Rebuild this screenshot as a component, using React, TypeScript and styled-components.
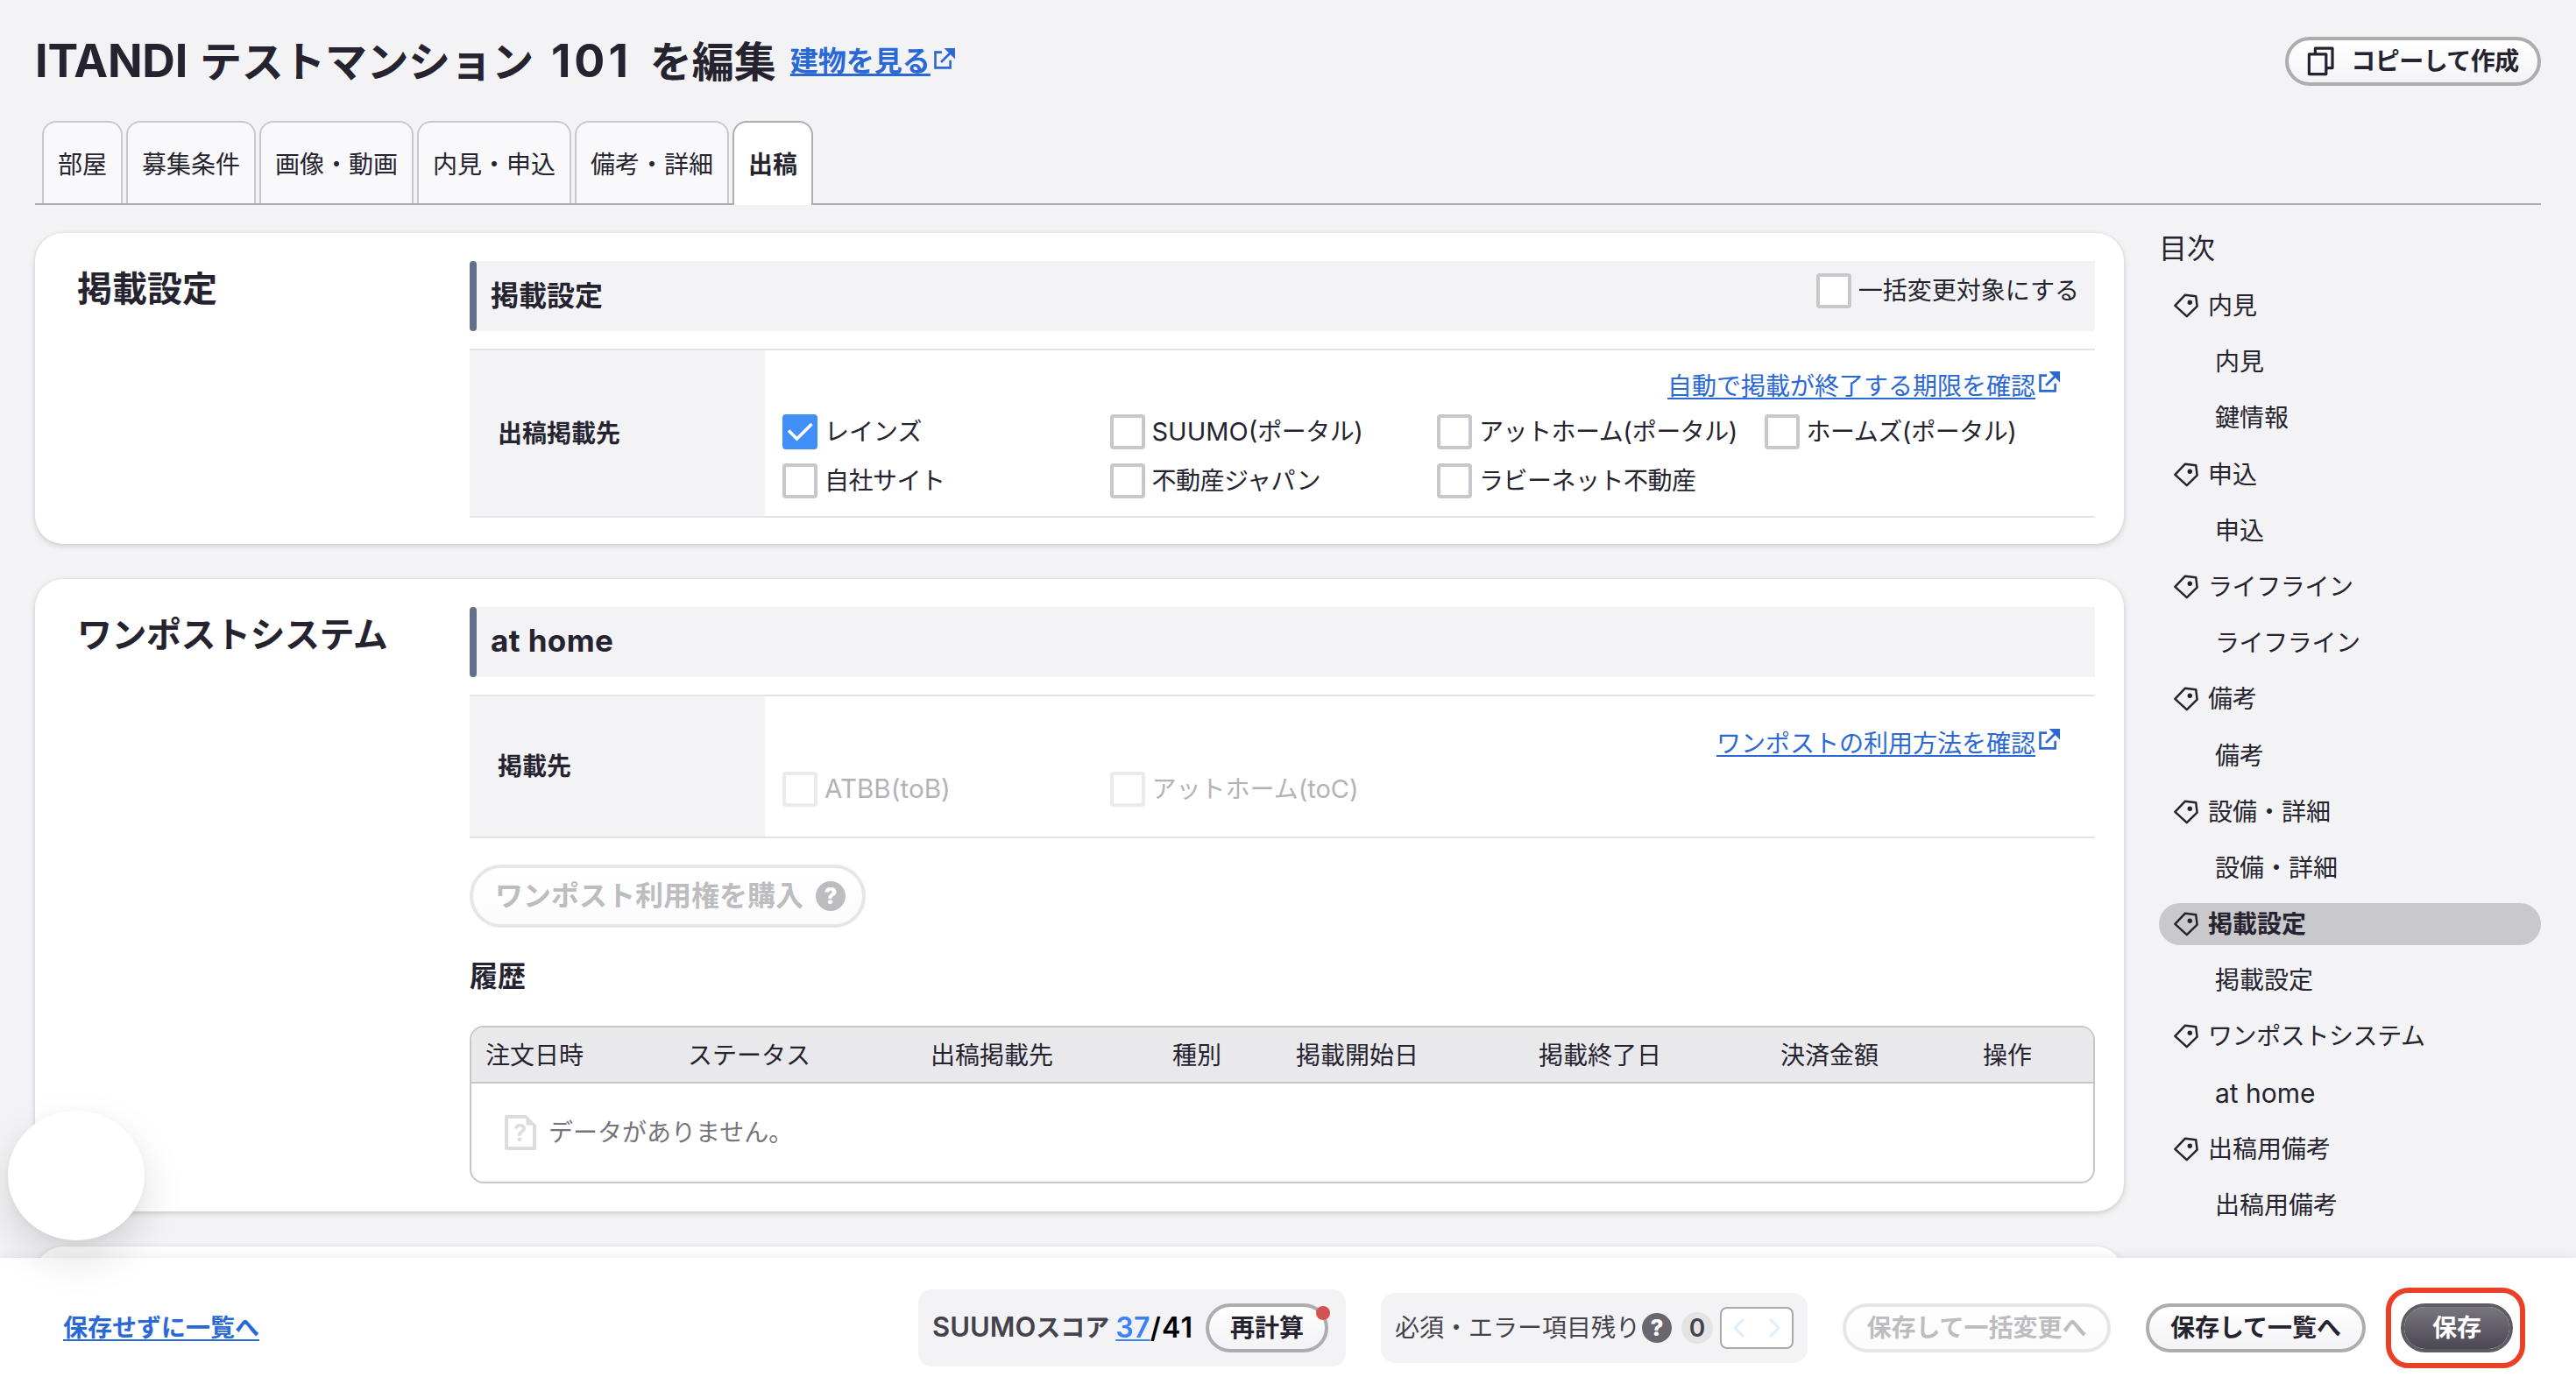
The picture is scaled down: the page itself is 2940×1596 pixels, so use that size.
import React from "react";
import styled, { createGlobalStyle, css } from "styled-components";

const color = {
  bg: "#f3f3f6",
  text: "#262330",
  link: "#2a68d6",
  line: "#e3e3e5",
  border: "#c6c6cb",
  strong: "#adadb0",
};

const GlobalStyle = createGlobalStyle`
  * { box-sizing: border-box; }
  body {
    margin: 0;
    background: ${color.bg};
    color: ${color.text};
    font-family: Inter, "Noto Sans CJK JP", sans-serif;
    font-size: 28px;
    line-height: 40px;
  }
`;

const Page = styled.div`
  position: relative;
  display: flex;
  flex-direction: column;
  width: 2940px;
  height: 1596px;
  overflow: hidden;
`;

const Main = styled.main`
  flex: none;
  height: 1436px;
  padding: 42px 40px 0;
  overflow: hidden;
`;

/* Latin letters are set slightly larger than the kana around them */
const Latin = styled.span<{ $size: number; $spacing?: number }>`
  font-size: ${(p) => p.$size}px;
  letter-spacing: ${(p) => p.$spacing ?? 0}px;
  line-height: 1;
`;

const TitleRow = styled.header`
  display: flex;
  align-items: center;
  height: 56px;
  margin-bottom: 40px;
`;

const Title = styled.h1`
  display: flex;
  align-items: baseline;
  gap: 14px;
  margin: 1px 16px 0 0;
  font-size: 48px;
  font-weight: 700;
  line-height: 56px;
`;

const TitleKana = styled.span`
  letter-spacing: -0.4px;
`;

const RoomNumber = styled(Latin)`
  margin: 0 7px 0 6px;
`;

const TextLink = styled.a<{ $size?: number; $bold?: boolean }>`
  color: ${color.link};
  font-size: ${(p) => p.$size ?? 28}px;
  font-weight: ${(p) => (p.$bold ? 700 : 400)};
  text-decoration: underline;
  text-decoration-thickness: ${(p) => (p.$size ? 3 : 2)}px;
  text-underline-offset: 3px;
  text-decoration-skip-ink: none;
`;

const IconLink = styled.span<{ $lift: number }>`
  display: inline-flex;
  align-items: center;
  gap: 4px;
  line-height: 42px;

  svg {
    margin-bottom: ${(p) => p.$lift}px;
  }
`;

const PillButton = styled.button<{ $width: number; $tone?: "disabled" | "primary" }>`
  display: flex;
  align-items: center;
  justify-content: center;
  flex: none;
  gap: 18px;
  width: ${(p) => p.$width}px;
  height: 56px;
  padding: 0;
  border: 4px solid ${color.strong};
  border-radius: 28px;
  background: linear-gradient(#ffffff, #f3f3f6) padding-box;
  color: ${color.text};
  font: inherit;
  font-weight: 700;
  line-height: 40px;
  white-space: nowrap;

  ${(p) =>
    p.$tone === "disabled" &&
    css`
      border-color: #e6e6e7;
      background: linear-gradient(#ffffff, #fbfbfc) padding-box;
      color: #bdbdc0;
    `}
  ${(p) =>
    p.$tone === "primary" &&
    css`
      border-color: #5e5b64;
      background: linear-gradient(#78767d, #4b4753) padding-box;
      color: #fff;
    `}
`;

const CopyButton = styled(PillButton)`
  margin-left: auto;
  letter-spacing: -0.5px;
`;

const Tabs = styled.nav`
  display: flex;
  gap: 4px;
  height: 96px;
  padding-left: 8px;
  border-bottom: 2px solid ${color.strong};
`;

const Tab = styled.a<{ $active?: boolean }>`
  height: ${(p) => (p.$active ? 96 : 94)}px;
  padding: 28px 16px 0;
  border: 2px solid ${(p) => (p.$active ? color.strong : "#c9c9cb")};
  border-bottom: 0;
  border-radius: 16px 16px 0 0;
  background: ${(p) => (p.$active ? "#fff" : "#f9f9fb")};
  font-weight: ${(p) => (p.$active ? 700 : 400)};
`;

const Columns = styled.div`
  display: flex;
  align-items: flex-start;
  gap: 40px;
  padding-top: 32px;
`;

const Cards = styled.div`
  display: flex;
  flex: none;
  flex-direction: column;
  gap: 40px;
  width: 2384px;
`;

const Card = styled.section<{ $bottom?: number }>`
  display: grid;
  grid-template-columns: 448px 1fr;
  padding: 32px 33px ${(p) => p.$bottom ?? 32}px 48px;
  border-radius: 32px;
  background: #fff;
  box-shadow: 0 2px 6px rgba(38, 35, 48, 0.2), 0 0 2px rgba(38, 35, 48, 0.06);
`;

const CardTitle = styled.h2<{ $kana?: boolean }>`
  margin: 0;
  font-size: 40px;
  font-weight: 700;
  letter-spacing: ${(p) => (p.$kana ? -0.5 : 0)}px;
  line-height: 64px;
`;

const Bar = styled.div`
  display: flex;
  height: 80px;
  margin-bottom: 20px;
  background: ${color.bg};
`;

const BarMark = styled.span`
  width: 8px;
  margin-right: 16px;
  border-radius: 4px;
  background: #64708b;
`;

const BarTitle = styled.h3`
  margin: 0;
  font-size: 32px;
  font-weight: 700;
  line-height: 80px;
`;

const BarOption = styled.div`
  margin: 14px 18px 0 auto;
`;

const FormRow = styled.div`
  display: grid;
  grid-template-columns: 337px 1fr;
  border: solid ${color.line};
  border-width: 2px 0;
`;

const RowLabel = styled.div`
  display: flex;
  align-items: center;
  padding-left: 32px;
  background: ${color.bg};
  font-weight: 700;
`;

const RowBody = styled.div<{ $top: number; $bottom: number }>`
  display: flex;
  flex-direction: column;
  gap: 11px;
  padding: ${(p) => p.$top}px 0 ${(p) => p.$bottom}px 20px;
`;

const HelpLine = styled.div`
  display: flex;
  justify-content: flex-end;
  padding-right: 40px;
`;

const CheckGrid = styled.div`
  display: grid;
  grid-template-columns: repeat(4, 373.5px);
  row-gap: 16px;
  width: 0;
`;

const CheckLabel = styled.label<{ $disabled?: boolean; $tight?: boolean }>`
  display: flex;
  align-items: center;
  gap: 8px;
  height: 40px;
  color: ${(p) => (p.$disabled ? "#b3b3b6" : color.text)};
  letter-spacing: ${(p) => (p.$tight ? -0.5 : 0)}px;
  white-space: nowrap;
`;

const Box = styled.span<{ $checked?: boolean; $disabled?: boolean }>`
  display: block;
  flex: none;
  width: 40px;
  height: 40px;
  border: 4px solid ${(p) => (p.$checked ? "#3f8ff7" : p.$disabled ? "#ebebed" : "#c8c8cc")};
  border-radius: 4px;
  background: ${(p) => (p.$checked ? "#3f8ff7" : "#fff")};

  svg {
    display: block;
    margin: -4px;
  }
`;

const BuyButton = styled(PillButton)`
  gap: 14px;
  height: 72px;
  margin-top: 30px;
  padding-left: 6px;
  border-radius: 36px;
  font-size: 32px;
`;

const HelpMark = styled.span<{ $bg: string }>`
  display: flex;
  align-items: center;
  justify-content: center;
  flex: none;
  width: 34px;
  height: 34px;
  border-radius: 50%;
  background: ${(p) => p.$bg};
  color: #fff;
  font-size: 26px;
  font-weight: 800;
  line-height: 34px;
`;

const HistoryTitle = styled.h4`
  margin: 0;
  font-size: 32px;
  font-weight: 700;
  line-height: 112px;
`;

const Table = styled.div`
  border: 2px solid ${color.border};
  border-radius: 16px;
  overflow: hidden;
`;

const TableHead = styled.div`
  display: grid;
  grid-template-columns: 231px 277px 276px 141px 277px 276px 231px 142px;
  height: 64px;
  border-bottom: 2px solid ${color.border};
  background: #e9e9ec;
  line-height: 64px;
`;

const HeadCell = styled.span`
  padding-left: 16px;
`;

const EmptyRow = styled.div`
  display: flex;
  align-items: center;
  gap: 14px;
  height: 112px;
  padding-left: 38px;
  color: #76747c;
`;

const Aside = styled.aside`
  flex: 1;
`;

const AsideTitle = styled.div`
  margin-bottom: 23px;
  font-size: 32px;
  line-height: 36px;
`;

const TocList = styled.div`
  display: flex;
  flex-direction: column;
  gap: 16.2px;
`;

const TocItem = styled.a<{ $sub?: boolean; $active?: boolean; $kana?: boolean }>`
  display: flex;
  align-items: center;
  gap: 11px;
  height: 48px;
  padding-left: ${(p) => (p.$sub ? 64 : 17)}px;
  border-radius: 24px;
  background: ${(p) => (p.$active ? "#c9c9cb" : "transparent")};
  font-weight: ${(p) => (p.$active ? 700 : 400)};
  letter-spacing: ${(p) => (p.$kana ? -0.4 : 0)}px;
`;

const Footer = styled.footer`
  position: relative;
  display: flex;
  align-items: center;
  justify-content: space-between;
  height: 160px;
  padding: 0 72px;
  background: #fff;
  box-shadow: 0 0 12px rgba(38, 35, 48, 0.1);
`;

const Actions = styled.div`
  display: flex;
  align-items: center;
  gap: 40px;
`;

const Panel = styled.div<{ $width: number; $height: number; $right: number }>`
  display: flex;
  align-items: center;
  width: ${(p) => p.$width}px;
  height: ${(p) => p.$height}px;
  padding: 0 ${(p) => p.$right}px 0 16px;
  border-radius: 16px;
  background: ${color.bg};
  color: #44424c;
  white-space: nowrap;
`;

const ScoreText = styled.span`
  margin-right: 7px;
  font-weight: 600;
`;

const Score = styled(Latin)`
  color: #3b82f6;
  font-weight: 600;
  text-decoration: underline;
  text-decoration-thickness: 2px;
  text-underline-offset: 2px;
`;

const Total = styled(Latin)`
  color: #000;
  font-weight: 600;
`;

const Recalc = styled.div`
  position: relative;
  margin-left: auto;
`;

const Dot = styled.span`
  position: absolute;
  top: 3px;
  right: -2px;
  width: 16px;
  height: 16px;
  border-radius: 50%;
  background: #d55252;
`;

const Count = styled.span`
  width: 36px;
  height: 36px;
  margin: 0 8px 0 11px;
  border-radius: 50%;
  background: #e4e4e4;
  font-weight: 600;
  line-height: 36px;
  text-align: center;
`;

const ErrorMark = styled(HelpMark)`
  margin-left: 2px;
`;

const Stepper = styled.div`
  display: flex;
  align-items: center;
  justify-content: space-between;
  width: 84px;
  height: 48px;
  padding: 0 13px;
  border: 2px solid #a9a9ae;
  border-radius: 8px;
  background: #fff;
`;

const SaveArea = styled.div`
  position: relative;
`;

const SaveFrame = styled.span`
  position: absolute;
  inset: -18px -14px -18px -17px;
  border: 6px solid #ea4025;
  border-radius: 26px;
`;

const FloatingBubble = styled.div`
  position: absolute;
  left: 9px;
  top: 1268px;
  width: 156px;
  height: 148px;
  border-radius: 50%;
  background: #fff;
  box-shadow: 0 20px 48px rgba(0, 0, 0, 0.13), 0 4px 8px rgba(0, 0, 0, 0.04);
`;

const ExternalIcon = () => (
  <svg width="24" height="24" viewBox="0 0 24 24" fill="none" stroke={color.link} strokeWidth="2.6">
    <path d="M9 4.6H1.5V22.4H18.6V13.8" />
    <path d="M8 16L19 5" />
    <path d="M11.5 0H24V12.5Z" fill={color.link} stroke="none" />
  </svg>
);

const CopyIcon = () => (
  <svg width="32" height="34" viewBox="0 0 32 34" fill="none" stroke={color.text} strokeWidth="3.2" strokeLinejoin="round">
    <rect x="2.4" y="8.8" width="19.4" height="22.8" />
    <path d="M9.4 8V2.2H29V24.6H23" />
  </svg>
);

const TagIcon = () => (
  <svg width="28" height="28" viewBox="0 0 28 28" fill="none" stroke={color.text} strokeWidth="2.5" strokeLinejoin="round">
    <path d="M1.4 13.8L13 1.7L25.2 3.2L26.6 14.6L14.8 26.2Z" />
    <circle cx="18.3" cy="10.2" r="2.7" fill={color.text} stroke="none" />
  </svg>
);

const CheckIcon = () => (
  <svg width="40" height="40" viewBox="0 0 40 40" fill="none" stroke="#fff" strokeWidth="3.6">
    <path d="M7 18.5L16.5 28L33.5 11" />
  </svg>
);

const EmptyIcon = () => (
  <svg width="36" height="40" viewBox="0 0 36 40" fill="none" stroke="#dcdcde" strokeWidth="4" strokeLinejoin="round">
    <path d="M25 2H2V38H34V11" />
    <path d="M24.5 0L36 11.5H24.5Z" fill="#dcdcde" stroke="none" />
    <text x="17.5" y="30" textAnchor="middle" fontSize="27" fontWeight="700" fill="#dcdcde" stroke="none">?</text>
  </svg>
);

const Chevron = ({ flip }: { flip?: boolean }) => (
  <svg width="14" height="22" viewBox="0 0 14 22" fill="none" stroke="#dfeeff" strokeWidth="3">
    <path d={flip ? "M2 1L12 11L2 21" : "M12 1L2 11L12 21"} />
  </svg>
);

const hasKatakana = (text: string) => /[ァ-ヶ]/.test(text);

type CheckProps = { children: React.ReactNode; checked?: boolean; disabled?: boolean; tight?: boolean };

const Check = ({ children, checked, disabled, tight }: CheckProps) => (
  <CheckLabel $disabled={disabled} $tight={tight}>
    <Box $checked={checked} $disabled={disabled}>{checked && <CheckIcon />}</Box>
    <span>{children}</span>
  </CheckLabel>
);

const HelpLink = ({ children }: { children: string }) => (
  <HelpLine>
    <IconLink $lift={10}>
      <TextLink>{children}</TextLink>
      <ExternalIcon />
    </IconLink>
  </HelpLine>
);

const tabs = ["部屋", "募集条件", "画像・動画", "内見・申込", "備考・詳細", "出稿"];

const headers = ["注文日時", "ステータス", "出稿掲載先", "種別", "掲載開始日", "掲載終了日", "決済金額", "操作"];

const toc: { name: string; items: string[] }[] = [
  { name: "内見", items: ["内見", "鍵情報"] },
  { name: "申込", items: ["申込"] },
  { name: "ライフライン", items: ["ライフライン"] },
  { name: "備考", items: ["備考"] },
  { name: "設備・詳細", items: ["設備・詳細"] },
  { name: "掲載設定", items: ["掲載設定"] },
  { name: "ワンポストシステム", items: ["at home"] },
  { name: "出稿用備考", items: ["出稿用備考"] },
];

export default function App() {
  return (
    <Page>
      <GlobalStyle />
      <Main>
        <TitleRow>
          <Title>
            <Latin $size={52} $spacing={-0.2}>ITANDI</Latin>
            <TitleKana>テストマンション</TitleKana>
            <RoomNumber $size={52} $spacing={4}>101</RoomNumber>
            <span>を編集</span>
          </Title>
          <IconLink $lift={6}>
            <TextLink $size={32} $bold>建物を見る</TextLink>
            <ExternalIcon />
          </IconLink>
          <CopyButton $width={292}>
            <CopyIcon />
            コピーして作成
          </CopyButton>
        </TitleRow>
        <Tabs>
          {tabs.map((tab) => (
            <Tab key={tab} $active={tab === "出稿"}>{tab}</Tab>
          ))}
        </Tabs>
        <Columns>
          <Cards>
            <Card $bottom={30}>
              <CardTitle>掲載設定</CardTitle>
              <div>
                <Bar>
                  <BarMark />
                  <BarTitle>掲載設定</BarTitle>
                  <BarOption>
                    <Check>一括変更対象にする</Check>
                  </BarOption>
                </Bar>
                <FormRow>
                  <RowLabel>出稿掲載先</RowLabel>
                  <RowBody $top={20} $bottom={20}>
                    <HelpLink>自動で掲載が終了する期限を確認</HelpLink>
                    <CheckGrid>
                      <Check checked>レインズ</Check>
                      <Check tight><Latin $size={29}>SUUMO(</Latin>ポータル<Latin $size={29}>)</Latin></Check>
                      <Check tight>アットホーム<Latin $size={29}>(</Latin>ポータル<Latin $size={29}>)</Latin></Check>
                      <Check tight>ホームズ<Latin $size={29}>(</Latin>ポータル<Latin $size={29}>)</Latin></Check>
                      <Check tight>自社サイト</Check>
                      <Check tight>不動産ジャパン</Check>
                      <Check tight>ラビーネット不動産</Check>
                    </CheckGrid>
                  </RowBody>
                </FormRow>
              </div>
            </Card>
            <Card>
              <CardTitle $kana>ワンポストシステム</CardTitle>
              <div>
                <Bar>
                  <BarMark />
                  <BarTitle><Latin $size={35} $spacing={0.4}>at home</Latin></BarTitle>
                </Bar>
                <FormRow>
                  <RowLabel>掲載先</RowLabel>
                  <RowBody $top={33} $bottom={34}>
                    <HelpLink>ワンポストの利用方法を確認</HelpLink>
                    <CheckGrid>
                      <Check disabled><Latin $size={29.6}>ATBB(toB)</Latin></Check>
                      <Check disabled>アットホーム<Latin $size={29}>(toC)</Latin></Check>
                    </CheckGrid>
                  </RowBody>
                </FormRow>
                <BuyButton $width={452} $tone="disabled">
                  ワンポスト利用権を購入
                  <HelpMark $bg="#bdbdc0">?</HelpMark>
                </BuyButton>
                <HistoryTitle>履歴</HistoryTitle>
                <Table>
                  <TableHead>
                    {headers.map((h) => <HeadCell key={h}>{h}</HeadCell>)}
                  </TableHead>
                  <EmptyRow>
                    <EmptyIcon />
                    データがありません。
                  </EmptyRow>
                </Table>
              </div>
            </Card>
            <Card>
              <CardTitle />
            </Card>
          </Cards>
          <Aside>
            <AsideTitle>目次</AsideTitle>
            <TocList>
              {toc.map((group) => (
                <React.Fragment key={group.name}>
                  <TocItem $active={group.name === "掲載設定"} $kana={hasKatakana(group.name)}>
                    <TagIcon />
                    {group.name}
                  </TocItem>
                  {group.items.map((item) => (
                    <TocItem key={item} $sub $kana={hasKatakana(item)}>
                      {item === "at home" ? <Latin $size={30}>{item}</Latin> : item}
                    </TocItem>
                  ))}
                </React.Fragment>
              ))}
            </TocList>
          </Aside>
        </Columns>
      </Main>
      <Footer>
        <TextLink $bold>保存せずに一覧へ</TextLink>
        <Actions>
          <Panel $width={488} $height={88} $right={20}>
            <ScoreText><Latin $size={31}>SUUMO</Latin>スコア</ScoreText>
            <Score $size={32} $spacing={0.3}>37</Score>
            <Total $size={32} $spacing={1.2}>/41</Total>
            <Recalc>
              <PillButton $width={140}>再計算</PillButton>
              <Dot />
            </Recalc>
          </Panel>
          <Panel $width={487} $height={80} $right={16}>
            必須・エラー項目残り
            <ErrorMark $bg="#69666f">?</ErrorMark>
            <Count>0</Count>
            <Stepper>
              <Chevron />
              <Chevron flip />
            </Stepper>
          </Panel>
          <PillButton $width={306} $tone="disabled">保存して一括変更へ</PillButton>
          <PillButton $width={251}>保存して一覧へ</PillButton>
          <SaveArea>
            <PillButton $width={128} $tone="primary">保存</PillButton>
            <SaveFrame />
          </SaveArea>
        </Actions>
      </Footer>
      <FloatingBubble />
    </Page>
  );
}
